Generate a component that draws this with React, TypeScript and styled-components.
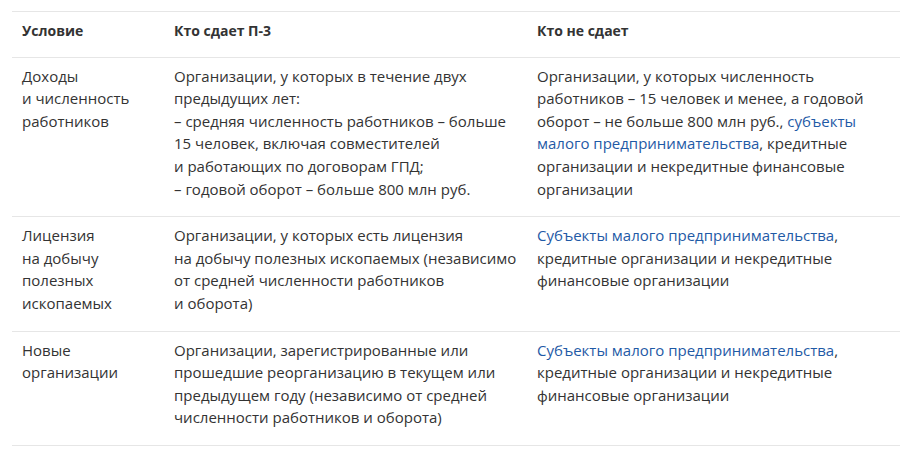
import React from "react";
import styled, { createGlobalStyle } from "styled-components";

const Global = createGlobalStyle`
  html, body { margin: 0; padding: 0; background: #fff; }
  body { font-family: "Open Sans", "Noto Sans", sans-serif; color: #333; }
  *, *::before, *::after { box-sizing: border-box; }
`;

const Wrap = styled.div`
  padding: 11px 10px 0 12px;
`;

const Table = styled.table`
  width: 888px;
  border-collapse: collapse;
  table-layout: fixed;
  font-size: 15px;
  line-height: 22.6px;
`;

const HeadCell = styled.th<{ $w: number }>`
  width: ${(p) => p.$w}px;
  text-align: left;
  font-weight: 700;
  font-size: 14px;
  padding: 8px 10px 14px;
  border-top: 1px solid #e6e6e6;
  border-bottom: 1px solid #e6e6e6;
  vertical-align: top;
`;

const Cell = styled.td`
  padding: 7px 10px 16px;
  border-bottom: 1px solid #e6e6e6;
  vertical-align: top;
  white-space: nowrap;
`;

const Link = styled.a`
  color: #1f5aa6;
  text-decoration: none;
`;

const lines = (arr: React.ReactNode[]) =>
  arr.map((l, i) => (
    <React.Fragment key={i}>
      {l}
      {i < arr.length - 1 && <br />}
    </React.Fragment>
  ));

export default function App() {
  return (
    <Wrap>
      <Global />
      <Table>
        <thead>
          <tr>
            <HeadCell $w={152}>Условие</HeadCell>
            <HeadCell $w={363}>Кто сдает П-3</HeadCell>
            <HeadCell $w={373}>Кто не сдает</HeadCell>
          </tr>
        </thead>
        <tbody>
          <tr>
            <Cell>{lines(["Доходы", "и численность", "работников"])}</Cell>
            <Cell>
              {lines([
                "Организации, у которых в течение двух",
                "предыдущих лет:",
                "– средняя численность работников – больше",
                "15 человек, включая совместителей",
                "и работающих по договорам ГПД;",
                "– годовой оборот – больше 800 млн руб.",
              ])}
            </Cell>
            <Cell>
              {lines([
                "Организации, у которых численность",
                "работников – 15 человек и менее, а годовой",
                <>
                  оборот – не больше 800 млн руб., <Link>субъекты</Link>
                </>,
                <>
                  <Link>малого предпринимательства</Link>, кредитные
                </>,
                "организации и некредитные финансовые",
                "организации",
              ])}
            </Cell>
          </tr>
          <tr>
            <Cell>{lines(["Лицензия", "на добычу", "полезных", "ископаемых"])}</Cell>
            <Cell>
              {lines([
                "Организации, у которых есть лицензия",
                "на добычу полезных ископаемых (независимо",
                "от средней численности работников",
                "и оборота)",
              ])}
            </Cell>
            <Cell>
              {lines([
                <>
                  <Link>Субъекты малого предпринимательства</Link>,
                </>,
                "кредитные организации и некредитные",
                "финансовые организации",
              ])}
            </Cell>
          </tr>
          <tr>
            <Cell>{lines(["Новые", "организации"])}</Cell>
            <Cell>
              {lines([
                "Организации, зарегистрированные или",
                "прошедшие реорганизацию в текущем или",
                "предыдущем году (независимо от средней",
                "численности работников и оборота)",
              ])}
            </Cell>
            <Cell>
              {lines([
                <>
                  <Link>Субъекты малого предпринимательства</Link>,
                </>,
                "кредитные организации и некредитные",
                "финансовые организации",
              ])}
            </Cell>
          </tr>
        </tbody>
      </Table>
    </Wrap>
  );
}
